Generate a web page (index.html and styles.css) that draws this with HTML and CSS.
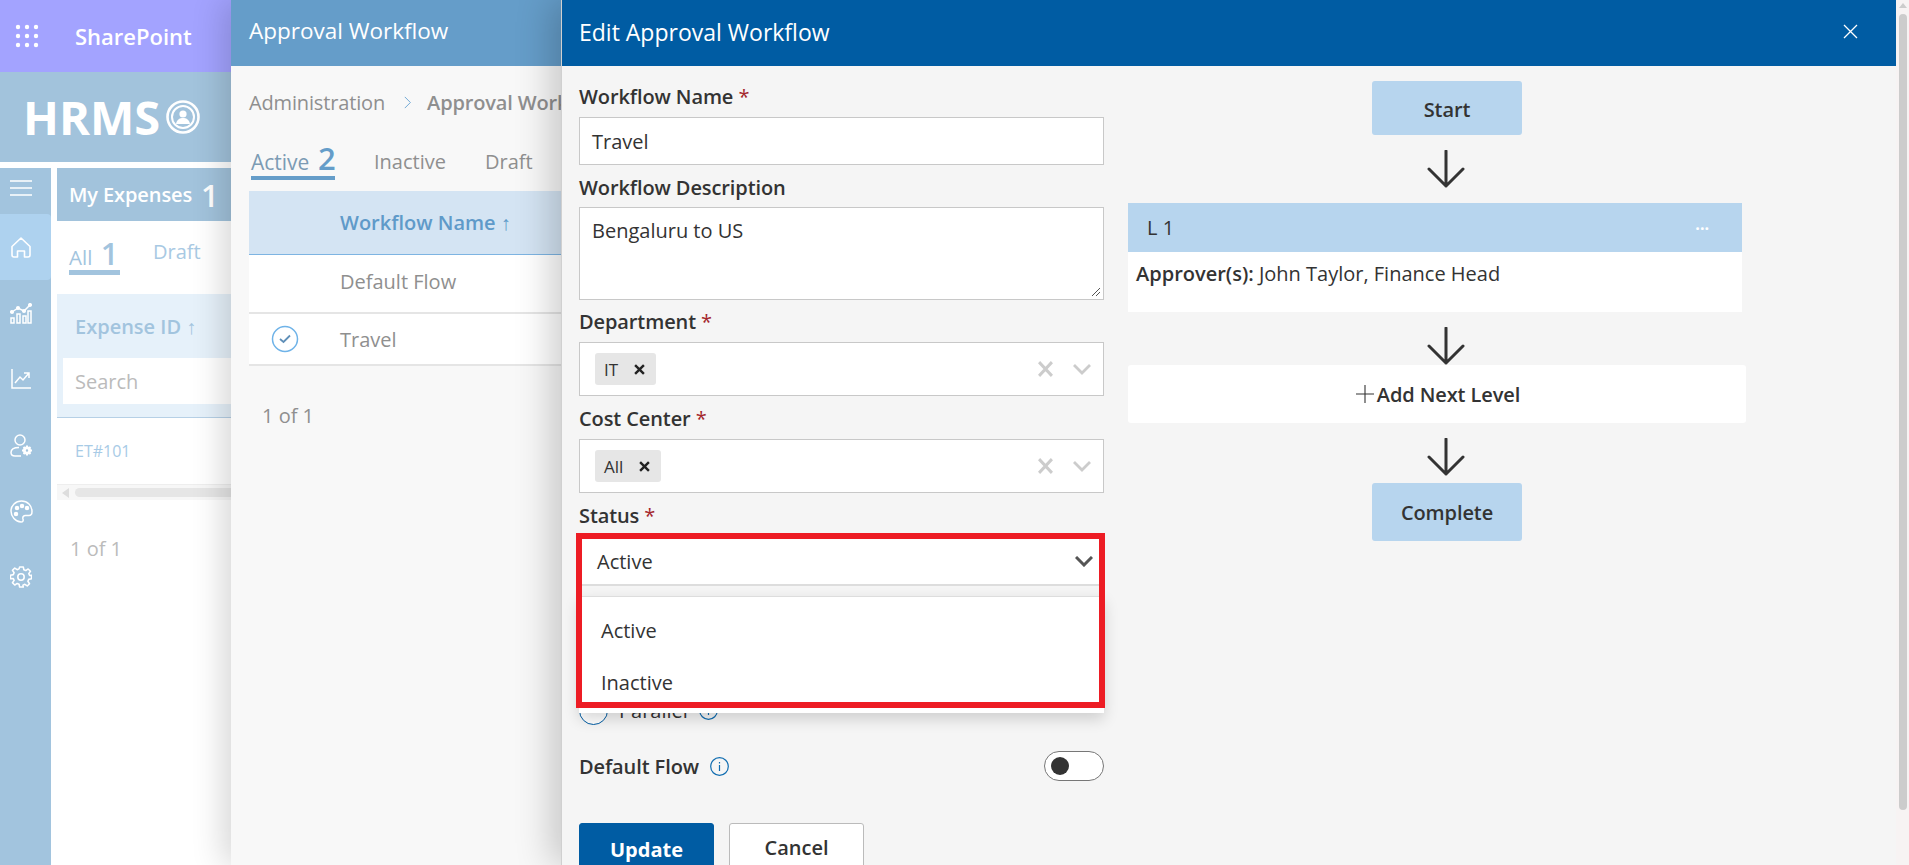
FILE: index.html
```html
<!DOCTYPE html>
<html lang="en">
<head>
<meta charset="utf-8">
<title>Edit Approval Workflow</title>
<link rel="stylesheet" href="styles.css">
</head>
<body>
<div class="page">
  <div class="desktop">
    <div class="app">
      <header class="suite">
        <svg class="waffle" viewBox="0 0 24 24" width="24" height="24" fill="#fff"><circle cx="3" cy="3" r="2.2"/><circle cx="12" cy="3" r="2.2"/><circle cx="21" cy="3" r="2.2"/><circle cx="3" cy="12" r="2.2"/><circle cx="12" cy="12" r="2.2"/><circle cx="21" cy="12" r="2.2"/><circle cx="3" cy="21" r="2.2"/><circle cx="12" cy="21" r="2.2"/><circle cx="21" cy="21" r="2.2"/></svg>
        <span class="suite-name">SharePoint</span>
      </header>
      <div class="brand">
        <span class="brand-name">HRMS</span>
        <svg class="brand-icon" viewBox="0 0 34 34" width="34" height="34" fill="none" stroke="#fff"><circle cx="17" cy="17" r="15.5" stroke-width="2.6"/><circle cx="17" cy="17" r="11" stroke-width="2"/><circle cx="17" cy="14" r="3.6" fill="#fff" stroke="none"/><path d="M10 24c1-5 4-6 7-6s6 1 7 6z" fill="#fff" stroke="none"/></svg>
      </div>
      <div class="work">
        <nav class="rail">
          <div class="rail-item rail-burger"><svg viewBox="0 0 22 16" width="22" height="16" stroke="#fff" stroke-width="1.3"><path d="M0 1h22M0 8h22M0 15h22"/></svg></div>
          <div class="rail-item rail-active"><svg viewBox="0 0 20 21" width="20" height="21" fill="none" stroke="#fff" stroke-width="1.6" stroke-linejoin="round"><path d="M1 9.5 10 1l9 8.5V18a2 2 0 0 1-2 2h-3.5v-6h-7v6H3a2 2 0 0 1-2-2z"/></svg></div>
          <div class="rail-item"><svg viewBox="0 0 22 21" width="22" height="21" fill="none" stroke="#fff" stroke-width="1.5"><path d="M1 15h3v5H1zM7 11h3v9H7zM13 13h3v7h-3zM18 8h3v12h-3z"/><path d="M2 9 8 5l6 3 6-6"/><circle cx="2" cy="9" r="1.3" fill="#fff"/><circle cx="8" cy="5" r="1.3" fill="#fff"/><circle cx="14" cy="8" r="1.3" fill="#fff"/><circle cx="20" cy="2" r="1.3" fill="#fff"/></svg></div>
          <div class="rail-item"><svg viewBox="0 0 20 20" width="20" height="20" fill="none" stroke="#fff" stroke-width="1.5"><path d="M1 0v19h19"/><path d="m4 14 5-6 3 3 6-7M13 4h5v5"/></svg></div>
          <div class="rail-item"><svg viewBox="0 0 23 23" width="23" height="23" fill="none" stroke="#fff" stroke-width="1.5"><circle cx="10" cy="6" r="5"/><path d="M9 13.500c-5 0-8 2-8 5 0 2 1.500 3.500 4 3.500h6"/><circle cx="17" cy="16.500" r="2.600" stroke-width="2.800"/><path d="M17 11.500v2M17 19.500v2M12 16.500h2M20 16.500h2M13.500 13l1.500 1.500M19 18.500l1.500 1.500M13.500 20l1.500-1.500M19 14.500l1.500-1.500" stroke-width="2"/></svg></div>
          <div class="rail-item"><svg viewBox="0 0 23 23" width="23" height="23" fill="none" stroke="#fff" stroke-width="1.5"><path d="M11.500 1C5.500 1 1 5.500 1 11s4.500 11 10 11c2 0 2.500-1.500 2-3-.6-2 .5-3.500 2.500-3.500H19c2.200 0 3-1.500 3-4C22 5.500 17.500 1 11.500 1z"/><circle cx="7" cy="8" r="1.500" fill="#fff"/><circle cx="12" cy="6" r="1.500" fill="#fff"/><circle cx="17" cy="8" r="1.500" fill="#fff"/><circle cx="6" cy="14" r="1.500" fill="#fff"/></svg></div>
          <div class="rail-item"><svg viewBox="0 0 24 24" width="22" height="22" fill="none" stroke="#fff" stroke-width="1.700" stroke-linejoin="round"><circle cx="12" cy="12" r="3.500"/><path d="M10 1h4l.6 3.100 2.100.9 2.600-1.800 2.500 2.500-1.800 2.600.9 2.100L23 10v4l-3.100.6-.9 2.100 1.800 2.600-2.500 2.500-2.600-1.800-2.100.9L14 23h-4l-.6-3.100-2.100-.9-2.600 1.800-2.500-2.500L4 15.700l-.9-2.100L0 14v-4l3.100-.6.9-2.100-1.800-2.600 2.500-2.500L7.300 4l2.100-.9z" transform="translate(.5 0)"/></svg></div>
        </nav>
        <main class="main">
          <div class="page-title"><span class="page-title-text">My Expenses</span><span class="page-count">1</span></div>
          <div class="tabs tabs-base">
            <span class="tab-on">All <b class="tab-num">1</b></span>
            <span class="tab-off">Draft</span>
          </div>
          <div class="base-head">
            <div class="base-col">Expense ID ↑</div>
            <div class="base-search">Search</div>
          </div>
          <div class="base-row">ET#101</div>
          <div class="base-scroll"><span class="base-scroll-arrow"></span><span class="base-scroll-thumb"></span></div>
          <div class="base-pager">1 of 1</div>
        </main>
      </div>
    </div>

    <section class="panel-list">
      <header class="list-head">Approval Workflow</header>
      <div class="crumbs">
        <span>Administration</span>
        <svg class="crumb-sep" viewBox="0 0 10 16" width="8" height="13" fill="none" stroke="#6ea6d4" stroke-width="1.200"><path d="m1 1 7 7-7 7"/></svg>
        <b class="crumb-now">Approval Workflow</b>
      </div>
      <div class="tabs tabs-list">
        <span class="list-tab-on">Active <b class="list-num">2</b></span>
        <span class="list-tab">Inactive</span>
        <span class="list-tab">Draft</span>
      </div>
      <div class="list-table">
        <div class="list-th">Workflow Name ↑</div>
        <div class="list-tr list-tr-first">Default Flow</div>
        <div class="list-tr">
          <svg class="row-check" viewBox="0 0 28 28" width="28" height="28" fill="none" stroke="#6fb3e8" stroke-width="1.500"><circle cx="14" cy="14" r="12.500"/><path d="m9 14 3.500 3L19 10.500" stroke="#5f8fb8" stroke-width="1.800"/></svg>
          Travel
        </div>
      </div>
      <div class="list-pager">1 of 1</div>
    </section>

    <section class="panel-edit">
      <header class="edit-head">
        <span>Edit Approval Workflow</span>
        <svg viewBox="0 0 15 15" width="15" height="15" stroke="#fff" stroke-width="1.300"><path d="m1 1 13 13M14 1 1 14"/></svg>
      </header>
      <div class="edit-body">
        <form class="form">
          <div class="field field-name">
            <label class="label">Workflow Name <i class="req">*</i></label>
            <div class="input">Travel</div>
          </div>
          <div class="field field-desc">
            <label class="label">Workflow Description</label>
            <div class="input textarea">Bengaluru to US
              <svg class="grip" viewBox="0 0 10 10" width="10" height="10" stroke="#555" stroke-width="1"><path d="M1 9 9 1M5 9l4-4"/></svg>
            </div>
          </div>
          <div class="field field-dept">
            <label class="label">Department <i class="req">*</i></label>
            <div class="multi">
              <span class="chip">IT <svg viewBox="0 0 10 10" width="11" height="11" stroke="#222" stroke-width="2.200"><path d="m1 1 8 8M9 1 1 9"/></svg></span>
              <span class="multi-actions">
                <svg viewBox="0 0 14 14" width="15" height="16" stroke="#ccc" stroke-width="2.800" preserveAspectRatio="none"><path d="m1 1 12 12M13 1 1 13"/></svg>
                <svg viewBox="0 0 18 11" width="18" height="11" fill="none" stroke="#ccc" stroke-width="2.800"><path d="m1 1 8 8 8-8"/></svg>
              </span>
            </div>
          </div>
          <div class="field field-cost">
            <label class="label">Cost Center <i class="req">*</i></label>
            <div class="multi">
              <span class="chip">All <svg viewBox="0 0 10 10" width="11" height="11" stroke="#222" stroke-width="2.200"><path d="m1 1 8 8M9 1 1 9"/></svg></span>
              <span class="multi-actions">
                <svg viewBox="0 0 14 14" width="15" height="16" stroke="#ccc" stroke-width="2.800" preserveAspectRatio="none"><path d="m1 1 12 12M13 1 1 13"/></svg>
                <svg viewBox="0 0 18 11" width="18" height="11" fill="none" stroke="#ccc" stroke-width="2.800"><path d="m1 1 8 8 8-8"/></svg>
              </span>
            </div>
          </div>
          <div class="field field-status">
            <label class="label">Status <i class="req">*</i></label>
            <div class="select">
              <span>Active</span>
              <svg viewBox="0 0 18 11" width="18" height="11" fill="none" stroke="#555" stroke-width="3"><path d="m1 1 8 8 8-8"/></svg>
              <div class="dropdown">
                <div class="option">Active</div>
                <div class="option">Inactive</div>
              </div>
              <div class="callout"></div>
            </div>
          </div>
          <div class="radio-row">
            <span class="radio"></span>
            <span>Parallel</span>
            <svg class="info" viewBox="0 0 19 19" width="19" height="19" fill="none" stroke="#0f6cb0" stroke-width="1.200"><circle cx="9.500" cy="9.500" r="8.800"/><path d="M9.500 8v6M9.500 5v1.500"/></svg>
          </div>
          <div class="default-row">
            <span class="default-label">Default Flow
              <svg class="info" viewBox="0 0 19 19" width="19" height="19" fill="none" stroke="#0f6cb0" stroke-width="1.200"><circle cx="9.500" cy="9.500" r="8.800"/><path d="M9.500 8v6M9.500 5v1.500"/></svg>
            </span>
            <span class="toggle"><span class="toggle-knob"></span></span>
          </div>
          <div class="actions">
            <button type="button" class="btn btn-primary">Update</button>
            <button type="button" class="btn">Cancel</button>
          </div>
        </form>
        <div class="flow">
          <div class="node">Start</div>
          <svg class="arrow" viewBox="0 0 38 38" width="38" height="38" fill="none" stroke="#333" stroke-width="3" stroke-linecap="round" stroke-linejoin="round"><path d="M19 1v35M2 19l17 17 17-17"/></svg>
          <div class="level">
            <div class="level-head"><span>L 1</span><span class="level-more">···</span></div>
            <div class="level-body"><b>Approver(s):</b> John Taylor, Finance Head</div>
          </div>
          <svg class="arrow arrow-gap" viewBox="0 0 38 38" width="38" height="38" fill="none" stroke="#333" stroke-width="3" stroke-linecap="round" stroke-linejoin="round"><path d="M19 1v35M2 19l17 17 17-17"/></svg>
          <div class="add-level"><svg viewBox="0 0 18 18" width="18" height="18" stroke="#333" stroke-width="1.100"><path d="M9 0v18M0 9h18"/></svg><span>Add Next Level</span></div>
          <svg class="arrow arrow-gap" viewBox="0 0 38 38" width="38" height="38" fill="none" stroke="#333" stroke-width="3" stroke-linecap="round" stroke-linejoin="round"><path d="M19 1v35M2 19l17 17 17-17"/></svg>
          <div class="node node-tall">Complete</div>
        </div>
      </div>
    </section>
  </div>
  <aside class="scrollbar"><span class="scroll-up"></span><span class="scroll-thumb"></span></aside>
</div>
</body>
</html>
```

FILE: styles.css
```css
* { box-sizing: border-box; }
html, body { margin: 0; height: 100%; overflow: hidden; }
body { font-family: "Open Sans", "Noto Sans", sans-serif; font-size: 20px; color: #333; background: #fff; }
.page { display: flex; height: 865px; overflow: hidden; }
.desktop { position: relative; flex: 1; overflow: hidden; }
.app { display: flex; flex-direction: column; height: 100%; width: 240px; }

.suite { flex: 0 0 72px; display: flex; align-items: center; background: #a3a3ff; color: #fff; padding-left: 15px; }
.waffle { flex: none; }
.suite-name { margin-left: 36px; font-size: 22px; font-weight: 600; }
.brand { flex: 0 0 90px; display: flex; align-items: center; background: #a2c3dc; padding-left: 23px; color: #fff; }
.brand-name { font-size: 47px; font-weight: 700; line-height: 1; }
.brand-icon { margin-left: 6px; }
.work { flex: 1; display: flex; margin-top: 6px; min-height: 0; }

.rail { flex: 0 0 51px; background: #a2c4de; display: flex; flex-direction: column; }
.rail-item { height: 66px; display: flex; align-items: center; justify-content: center; padding-right: 9px; }
.rail-burger { height: 46px; padding-bottom: 6px; }
.rail-active { background: #aed2ef; border-radius: 0 4px 4px 0; }

.main { flex: 1; margin-left: 6px; min-width: 0; }
.page-title { height: 53px; background: #a2c3dc; color: #fff; display: flex; align-items: center; padding-left: 12px; }
.page-title-text { font-size: 20px; font-weight: 600; letter-spacing: -0.1px; }
.page-count { font-size: 31px; font-weight: 600; margin-left: 9px; }
.tabs-base { display: flex; height: 73px; padding: 24px 0 0 12px; gap: 33px; }
.tab-on { height: 30px; width: 51px; border-bottom: 5px solid #a2c4de; color: #a2c4de; font-size: 20.500px; line-height: 16px; white-space: nowrap; }
.tab-num { font-size: 31px; font-weight: 600; margin-left: 3px; line-height: 16px; }
.tab-off { color: #a8c9e3; font-size: 20px; line-height: 14px; }
.base-head { height: 124px; background: #e6f1fa; border-bottom: 1px solid #b6d0e6; padding: 18px 0 0 6px; }
.base-col { color: #a2c4de; font-size: 20px; font-weight: 600; line-height: 30px; padding-left: 12px; white-space: nowrap; }
.base-search { height: 46px; margin-top: 16px; background: #fff; color: #bbb; font-size: 20px; line-height: 48px; padding-left: 12px; }
.base-row { height: 66px; padding: 21px 0 0 18px; color: #a8cbe6; font-size: 16px; line-height: 24px; }
.base-scroll { display: flex; align-items: center; height: 16px; background: #f7f7f7; border-top: 1px solid #eee; padding-left: 5px; }
.base-scroll-arrow { width: 0; height: 0; border: 5px solid transparent; border-right: 7px solid #ddd; border-left: 0; }
.base-scroll-thumb { flex: 1; height: 9px; margin-left: 6px; background: #e6e6e6; border-radius: 5px; }
.base-pager { margin: 34px 0 0 13px; color: #bbb; font-size: 20px; line-height: 30px; }

.panel-list { position: absolute; left: 231px; top: 0; bottom: 0; width: 330px; background: #f8f8f8; box-shadow: -8px 0 30px rgba(0,0,0,.16); }
.list-head { height: 66px; background: #659dc9; color: #fff; font-size: 22.500px; line-height: 62px; padding-left: 18px; white-space: nowrap; }
.crumbs { display: flex; align-items: center; height: 30px; margin-top: 21px; padding-left: 18px; color: #8f8f8f; font-size: 20px; letter-spacing: -0.15px; white-space: nowrap; overflow: hidden; }
.crumb-sep { margin: 0 15px 0 19px; flex: none; }
.crumb-now { font-weight: 600; }
.tabs-list { display: flex; height: 74px; padding: 31px 0 0 20px; gap: 39px; }
.list-tab-on { height: 32px; width: 84px; border-bottom: 4px solid #659dc9; color: #7c9bb4; font-size: 21px; line-height: 28px; font-weight: 500; white-space: nowrap; }
.list-num { font-size: 31px; font-weight: 600; color: #659dc9; margin-left: 3px; line-height: 20px; }
.list-tab { color: #8f8f8f; font-size: 20px; line-height: 28px; }
.list-table { margin-left: 18px; }
.list-th { height: 64px; background: #d4e4f3; border-bottom: 1px solid #7db4e2; color: #5f9ac9; font-size: 20px; font-weight: 600; line-height: 64px; padding-left: 91px; }
.list-tr { position: relative; display: flex; align-items: center; height: 52px; background: #fff; border-bottom: 2px solid #e5e5e5; padding-left: 91px; color: #8f8f8f; font-size: 20px; }
.list-tr-first { height: 59px; padding-bottom: 4px; }
.row-check { position: absolute; left: 22px; top: 11px; }
.list-pager { margin: 35px 0 0 31px; color: #8f8f8f; font-size: 20px; line-height: 30px; }

.panel-edit { position: absolute; left: 561px; top: 0; bottom: 0; right: 0; display: flex; flex-direction: column; background: #f5f5f5; border-left: 1px solid #d0d0d0; box-shadow: -10px 0 34px rgba(0,0,0,.2); }
.edit-head { flex: 0 0 66px; display: flex; align-items: center; justify-content: space-between; background: #005ca3; color: #fff; font-size: 23px; padding: 0 38px 3px 17px; }
.edit-body { flex: 1; display: flex; min-height: 0; overflow: hidden; }
.form { flex: 0 0 542px; padding: 18px 0 0 17px; }
.field { margin-bottom: 9px; }
.label { display: block; font-weight: 600; font-size: 20px; letter-spacing: -0.1px; line-height: 26px; margin-bottom: 7px; }
.req { color: #a4262c; font-style: normal; font-weight: 400; }
.input { position: relative; height: 48px; background: #fff; border: 1px solid #c8c8c8; padding: 0 12px; line-height: 48px; }
.textarea { height: 93px; line-height: 24px; padding-top: 11px; }
.grip { position: absolute; right: 2px; bottom: 2px; }
.multi { display: flex; align-items: center; justify-content: space-between; height: 54px; background: #fff; border: 1px solid #c8c8c8; padding: 0 12px 0 15px; }
.field-name { margin-bottom: 10px; }
.field-desc .label { margin-bottom: 6px; }
.field-dept { margin-bottom: 10px; }
.field-cost { margin-bottom: 10px; }
.chip { display: flex; align-items: center; gap: 16px; height: 32px; padding: 0 11px 0 9px; background: #e6e6e6; border-radius: 3px; font-size: 17px; }
.multi-actions { display: flex; align-items: center; gap: 20px; }
.field-status { margin-bottom: 0; }
.field-status .label { margin-bottom: 8px; }
.select { position: relative; display: flex; align-items: center; justify-content: space-between; height: 49px; background: #fff; border-bottom: 2px solid #ddd; padding: 2px 11px 0 18px; }
.dropdown { position: absolute; left: 0; right: 0; top: 59px; height: 117px; padding-top: 8px; background: #fff; border-top: 1px solid #ddd; box-shadow: 0 6px 14px rgba(0,0,0,.16); z-index: 2; }
.option { height: 52px; line-height: 52px; padding-left: 22px; }
.callout { position: absolute; left: -3px; right: -1px; top: -4px; height: 175px; border: 6px solid #ed1c24; z-index: 3; }
.radio-row { display: flex; align-items: center; gap: 11px; margin-top: 110px; height: 29px; }
.radio { width: 29px; height: 29px; border: 1px solid #005ca3; border-radius: 50%; background: #fff; }
.default-row { display: flex; align-items: center; justify-content: space-between; margin-top: 26px; height: 30px; }
.default-label { display: flex; align-items: center; gap: 11px; font-weight: 600; letter-spacing: -0.1px; }
.toggle { width: 60px; height: 30px; padding: 5px 6px; border: 1px solid #777; border-radius: 15px; background: #fff; }
.toggle-knob { display: block; width: 18px; height: 18px; border-radius: 50%; background: #333; }
.actions { display: flex; gap: 15px; margin-top: 42px; }
.btn { width: 135px; height: 60px; padding: 0 0 10px; font: 600 20px/24px "Open Sans", "Noto Sans", sans-serif; color: #333; background: #fff; border: 1px solid #bbb; border-radius: 3px; }
.btn-primary { background: #005ca3; border-color: #005ca3; color: #fff; font-weight: 700; padding-bottom: 6px; }

.flow { flex: 1; display: flex; flex-direction: column; align-items: flex-start; padding: 15px 0 0 24px; }
.node { width: 150px; height: 54px; margin-left: 244px; padding-top: 2px; background: #b7d5ee; border-radius: 3px; display: flex; align-items: center; justify-content: center; font-weight: 600; letter-spacing: -0.1px; }
.node-tall { height: 58px; margin-top: 7px; padding-top: 0; }
.arrow { margin: 15px 0 15px 299px; flex: none; }
.arrow-gap { margin-bottom: 0; }
.level { width: 614px; }
.level-head { height: 49px; background: #b7d5ee; display: flex; align-items: center; justify-content: space-between; padding: 0 33px 0 19px; font-weight: 500; }
.level-more { color: #fff; font-weight: 700; font-size: 16px; }
.level-body { height: 60px; background: #fff; padding: 8px 8px 0; line-height: 28px; }
.level-body b { font-weight: 600; }
.add-level { width: 618px; height: 58px; background: #fff; border-radius: 3px; display: flex; align-items: center; justify-content: center; gap: 3px; padding-left: 2px; font-weight: 600; letter-spacing: -0.1px; }

.scrollbar { flex: 0 0 13px; position: relative; display: flex; flex-direction: column; align-items: center; background: #f7f3f3; padding: 3px 2px 0 3px; }
.scroll-up { width: 0; height: 0; border: 4px solid transparent; border-top: 0; border-bottom: 5px solid #ccc; }
.scroll-thumb { width: 8px; height: 796px; margin-top: 6px; background: #ccc; border-radius: 4px; }
```
